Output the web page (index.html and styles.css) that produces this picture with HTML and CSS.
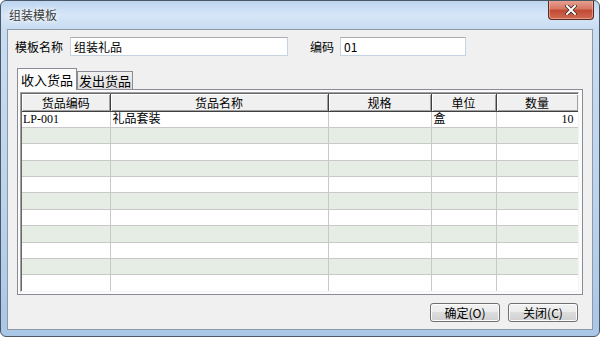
FILE: index.html
```html
<!DOCTYPE html>
<html lang="zh-CN">
<head>
    <meta charset="UTF-8">
    <title>组装模板</title>
    <link rel="stylesheet" href="styles.css">
</head>
<body>
    <div class="window">
        <div class="titlebar">
            <span class="title">组装模板</span>
            <button class="close-btn" title="关闭">
                <svg width="12" height="10" viewBox="0 0 12 10">
                    <path d="M2 1 L10 9 M10 1 L2 9" stroke="#3c2a26" stroke-width="3.6" stroke-linecap="square"/>
                    <path d="M2 1 L10 9 M10 1 L2 9" stroke="#ffffff" stroke-width="2" stroke-linecap="square"/>
                </svg>
            </button>
        </div>

        <div class="client">
            <div class="form-row">
                <label class="field-label">模板名称</label>
                <input class="text-input name-input" type="text" value="组装礼品">
                <label class="field-label code-label">编码</label>
                <input class="text-input code-input" type="text" value="01">
            </div>

            <div class="tabs">
                <div class="tab active">收入货品</div>
                <div class="tab">发出货品</div>
            </div>

            <div class="tab-panel">
                <div class="grid">
                    <table class="grid-table">
                        <colgroup>
                            <col style="width: 88px">
                            <col style="width: 218px">
                            <col style="width: 103px">
                            <col style="width: 65px">
                            <col style="width: 82px">
                        </colgroup>
                        <thead>
                            <tr>
                                <th>货品编码</th>
                                <th>货品名称</th>
                                <th>规格</th>
                                <th>单位</th>
                                <th>数量</th>
                            </tr>
                        </thead>
                        <tbody>
                            <tr><td class="code">LP-001</td><td>礼品套装</td><td></td><td>盒</td><td class="num">10</td></tr>
                            <tr><td></td><td></td><td></td><td></td><td></td></tr>
                            <tr><td></td><td></td><td></td><td></td><td></td></tr>
                            <tr><td></td><td></td><td></td><td></td><td></td></tr>
                            <tr><td></td><td></td><td></td><td></td><td></td></tr>
                            <tr><td></td><td></td><td></td><td></td><td></td></tr>
                            <tr><td></td><td></td><td></td><td></td><td></td></tr>
                            <tr><td></td><td></td><td></td><td></td><td></td></tr>
                            <tr><td></td><td></td><td></td><td></td><td></td></tr>
                            <tr><td></td><td></td><td></td><td></td><td></td></tr>
                            <tr><td></td><td></td><td></td><td></td><td></td></tr>
                        </tbody>
                    </table>
                </div>
            </div>

            <div class="actions">
                <button class="btn">确定(O)</button>
                <button class="btn">关闭(C)</button>
            </div>
        </div>
    </div>
</body>
</html>
```

FILE: styles.css
```css
* {
    box-sizing: border-box;
}

html, body {
    margin: 0;
    padding: 0;
    background: #ffffff;
}

body {
    font-family: "Noto Sans CJK SC", "Liberation Sans", sans-serif;
    font-size: 12px;
    color: #000;
}

.window {
    width: 600px;
    height: 337px;
    border: 1px solid #4a5866;
    border-radius: 6px;
    padding: 0 6px 6px 6px;
    background: linear-gradient(to bottom, #bcd5ef 0px, #d6e6f8 14px, #c9dcf2 28px, #bcd3ec 200px, #aac6e6 337px);
    display: flex;
    flex-direction: column;
    overflow: hidden;
}

.titlebar {
    height: 28px;
    display: flex;
    align-items: flex-start;
    flex-shrink: 0;
}

.title {
    margin-left: 2px;
    margin-top: 6px;
    color: #3a3a3a;
    font-size: 12px;
    line-height: 16px;
    text-shadow: 0 0 6px #ffffff, 0 0 3px #ffffff;
}

.close-btn {
    margin-left: auto;
    margin-right: -1px;
    margin-top: -1px;
    width: 46px;
    height: 20px;
    padding: 0;
    border: 1px solid #5b2a20;
    border-top: none;
    border-radius: 0 0 4px 4px;
    background: linear-gradient(to bottom, #e9a596 0%, #d67864 45%, #c24a35 55%, #cf6a52 100%);
    box-shadow: inset 0 0 0 1px rgba(255, 200, 190, 0.5);
    display: flex;
    align-items: center;
    justify-content: center;
}

.client {
    flex: 1;
    border: 1px solid #8b99a9;
    background: #f0f0f0;
    display: flex;
    flex-direction: column;
}

.form-row {
    display: flex;
    align-items: center;
    margin-top: 7px;
    padding-left: 7px;
    height: 19px;
}

.field-label {
    font-size: 12px;
    line-height: 19px;
    color: #000;
}

.text-input {
    height: 19px;
    margin-left: 7px;
    padding: 0 3px;
    border: 1px solid #c5d2e0;
    border-top-color: #abadb3;
    background: #fff;
    font-family: "Noto Sans CJK SC", sans-serif;
    font-size: 12px;
    color: #000;
    outline: none;
}

.name-input {
    width: 218px;
}

.code-label {
    margin-left: 22px;
}

.code-input {
    width: 126px;
    margin-left: 6px;
}

.tabs {
    display: flex;
    align-items: flex-end;
    margin-top: 12px;
    padding-left: 9px;
    height: 21px;
    position: relative;
    z-index: 1;
}

.tab {
    height: 18px;
    padding: 0 1px;
    border: 1px solid #898c95;
    border-bottom: none;
    background: linear-gradient(to bottom, #f0f0f0, #dedede);
    line-height: 17px;
    font-size: 13px;
    margin-left: -1px;
}

.tab.active {
    height: 22px;
    margin-left: 0;
    margin-bottom: -1px;
    padding: 0 3px;
    background: #fbfbfb;
    line-height: 21px;
    margin-right: 1px;
}

.tab-panel {
    margin-left: 9px;
    width: 566px;
    height: 206px;
    border: 1px solid #898c95;
    background: #fbfbfb;
    padding: 2px 3px 2px 2px;
}

.grid {
    height: 100%;
    border: 1px solid #a0a0a0;
    border-right-color: #f4f4f4;
    border-bottom-color: #f4f4f4;
    box-shadow: inset 1px 1px 0 #696969;
    padding: 1px 0 0 1px;
    background: #fff;
    overflow: hidden;
}

.grid-table {
    border-collapse: collapse;
    table-layout: fixed;
    width: 556px;
    font-family: "Liberation Serif", "Noto Sans CJK SC", serif;
    font-size: 12px;
}

.grid-table th {
    height: 17px;
    padding: 0;
    background: #f0f0f0;
    border-right: 1px solid #404040;
    border-bottom: 1px solid #404040;
    box-shadow: inset 1px 1px 0 #ffffff, inset -1px -1px 0 #a0a0a0;
    font-family: "Noto Sans CJK SC", sans-serif;
    font-weight: normal;
    font-size: 12px;
    line-height: 15px;
    text-align: center;
}

.grid-table td {
    height: 16.4px;
    padding: 0 2px;
    border-right: 1px solid #c8c8c8;
    border-bottom: 1px solid #c8c8c8;
    line-height: 15px;
    white-space: nowrap;
    overflow: hidden;
}

.grid-table tbody tr:nth-child(even) td {
    background: #e5ede4;
}

.grid-table td.code {
    padding-left: 1px;
}

.grid-table td.num {
    text-align: right;
    padding-right: 4px;
}

.actions {
    display: flex;
    justify-content: flex-end;
    gap: 8px;
    margin-top: 8px;
    padding-right: 14px;
}

.btn {
    width: 70px;
    height: 19px;
    padding: 0;
    border: 1px solid #707070;
    border-radius: 3px;
    background: linear-gradient(to bottom, #f2f2f2 0%, #ebebeb 50%, #dddddd 50%, #cfcfcf 100%);
    box-shadow: inset 0 0 0 1px #fcfcfc;
    font-family: "Noto Sans CJK SC", sans-serif;
    font-size: 12px;
    line-height: 16px;
    color: #000;
}
```
